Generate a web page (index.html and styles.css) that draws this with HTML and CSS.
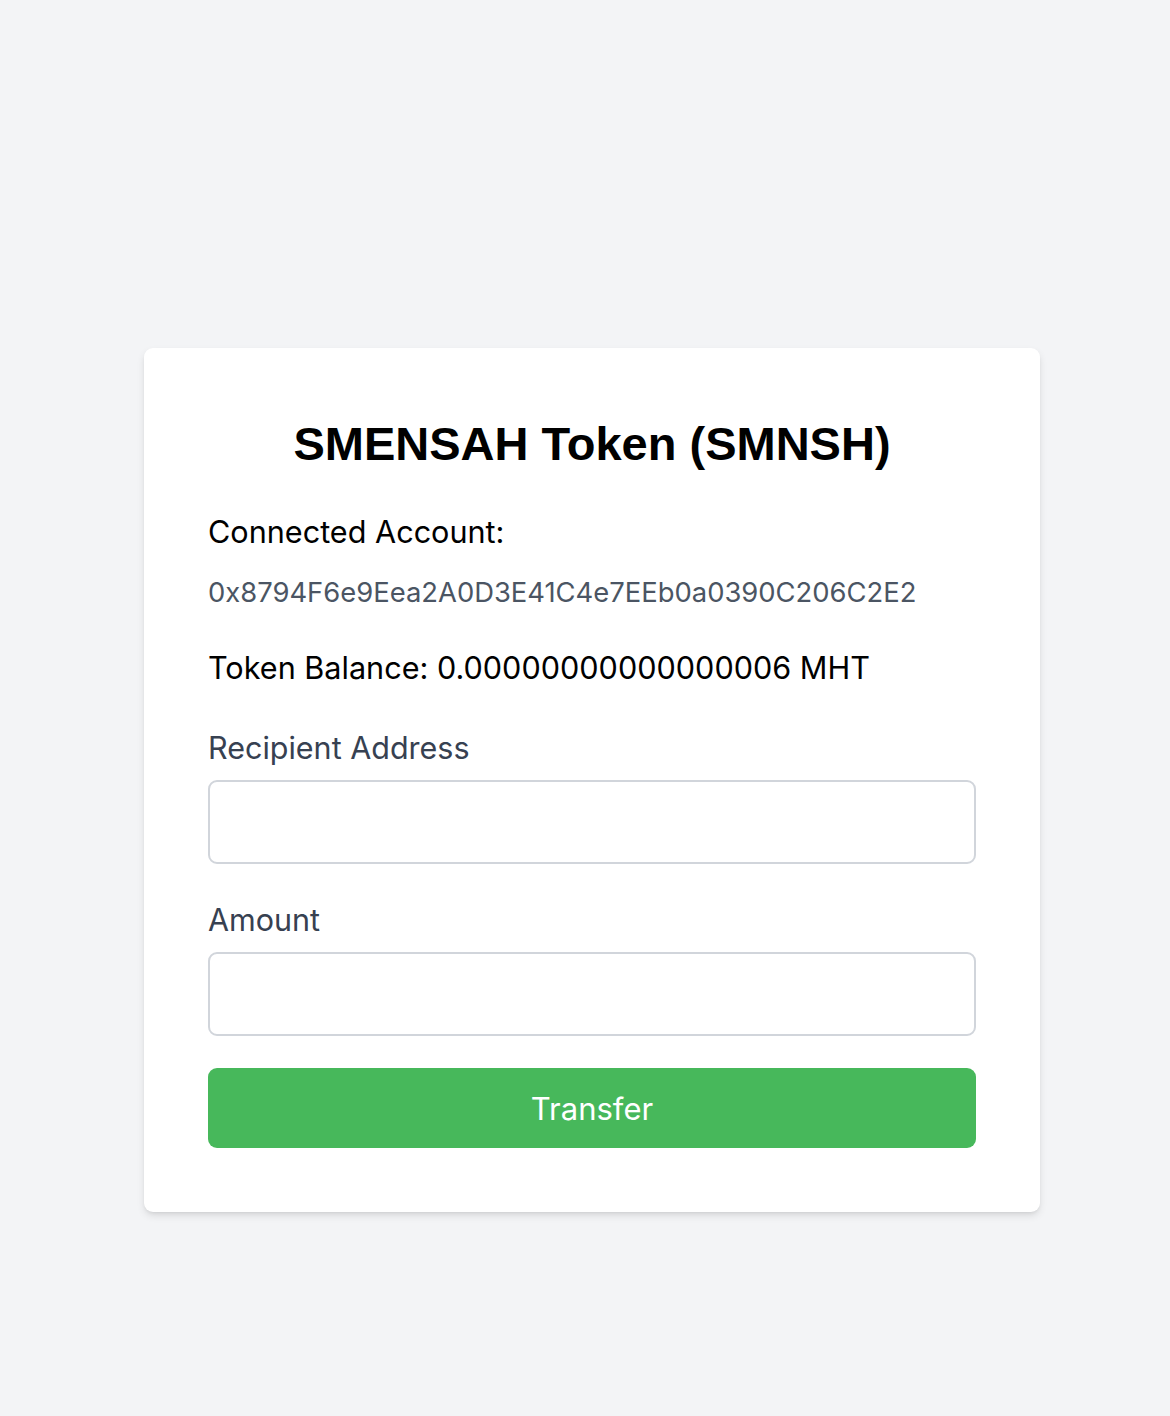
FILE: index.html
```html
<!DOCTYPE html>
<html>
<head>
<meta charset="utf-8">
<link rel="stylesheet" href="styles.css">
</head>
<body>
<div class="page">
  <div class="card">
    <h1 class="title">SMENSAH Token (SMNSH)</h1>
    <p class="label-strong">Connected Account:</p>
    <p class="address">0x8794F6e9Eea2A0D3E41C4e7EEb0a0390C206C2E2</p>
    <p class="balance">Token Balance: 0.00000000000000006 MHT</p>
    <div class="field">
      <label class="field-label">Recipient Address</label>
      <input class="field-input" type="text">
    </div>
    <div class="field">
      <label class="field-label">Amount</label>
      <input class="field-input" type="text">
    </div>
    <button class="btn">Transfer</button>
  </div>
</div>
</body>
</html>
```
FILE: styles.css
```css
html, body {
  margin: 0;
  padding: 0;
}
body {
  background: #f3f4f6;
  font-family: Inter, "Noto Sans", sans-serif;
  width: 1170px;
  height: 1416px;
}
.page {
  padding: 348px 0 0 144px;
  box-sizing: border-box;
}
.card {
  width: 896px;
  box-sizing: border-box;
  background: #fff;
  border-radius: 9px;
  box-shadow: 0 4px 8px -1px rgba(0,0,0,0.12), 0 2px 4px -2px rgba(0,0,0,0.1);
  padding: 64px;
  display: flex;
  flex-direction: column;
}
.title {
  margin: 0 0 32px;
  font-family: "Liberation Sans", Arial, sans-serif;
  font-weight: 700;
  font-size: 47px;
  line-height: 64px;
  text-align: center;
  color: #000;
}
.label-strong {
  margin: 0;
  font-size: 30.6px;
  line-height: 48px;
  color: #000;
}
.address {
  margin: 16px 0 0;
  font-size: 27.4px;
  line-height: 40px;
  color: #4b5563;
}
.balance {
  margin: 32px 0 0;
  font-size: 30.6px;
  line-height: 48px;
  color: #000;
}
.field {
  margin-top: 34px;
  display: flex;
  flex-direction: column;
}
.field-label {
  font-size: 30.5px;
  line-height: 44px;
  color: #374151;
  margin-bottom: 10px;
}
.field-input {
  height: 84px;
  box-sizing: border-box;
  border: 2px solid #d1d5db;
  border-radius: 9px;
  font-size: 30px;
  padding: 0 20px;
  outline: none;
}
.btn {
  margin-top: 32px;
  height: 80px;
  border: none;
  border-radius: 9px;
  background: #47b85b;
  color: #fff;
  font-family: Inter, "Noto Sans", sans-serif;
  font-size: 31px;
}
```
